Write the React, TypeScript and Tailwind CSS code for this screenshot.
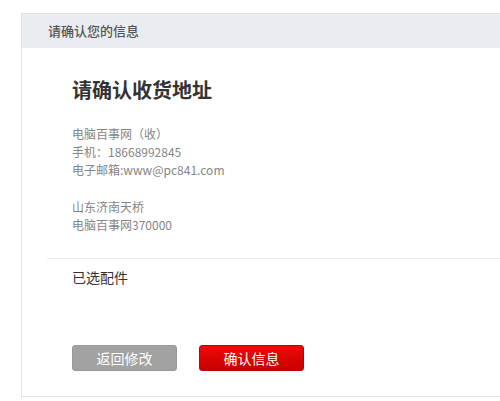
import React from "react";

export default function App() {
  return (
    <div
      className="w-[500px] h-[401px] bg-white overflow-hidden pt-[13px] pl-[21px]"
      style={{ fontFamily: '"Noto Sans CJK SC", "Microsoft YaHei", sans-serif' }}
    >
      <div className="w-[520px] h-[384px] border border-[#e2e2e2] bg-white flex flex-col">
        <div className="h-[34px] bg-[#e9edf1] flex items-center pl-[26px] text-[13px] font-medium text-[#555]">
          请确认您的信息
        </div>
        <div className="pl-[25px] pt-[28px]">
          <div className="pl-[25px]">
            <div className="text-[20px] leading-[28px] font-bold text-[#333]">请确认收货地址</div>
            <div className="mt-[21px] text-[12px] leading-[18px] text-[#858585]">
              <div>电脑百事网（收）</div>
              <div>手机：18668992845</div>
              <div>电子邮箱:www@pc841.com</div>
            </div>
            <div className="mt-[19px] text-[12px] leading-[18px] text-[#858585]">
              <div>山东济南天桥</div>
              <div>电脑百事网370000</div>
            </div>
          </div>
          <div className="mt-[24px] border-t border-[#ebebeb]" />
          <div className="pl-[25px]">
            <div className="mt-[8px] text-[14px] leading-[20px] text-[#333]">已选配件</div>
            <div className="mt-[58px] flex gap-[22px]">
              <button className="w-[105px] h-[26px] rounded-[3px] bg-[#a2a2a2] border border-[#999] text-white text-[14px] leading-none flex items-center justify-center">
                返回修改
              </button>
              <button className="w-[105px] h-[26px] rounded-[3px] bg-gradient-to-b from-[#ee0a0a] to-[#c80000] border border-[#c00000] text-white text-[14px] leading-none flex items-center justify-center">
                确认信息
              </button>
            </div>
          </div>
        </div>
      </div>
    </div>
  );
}
